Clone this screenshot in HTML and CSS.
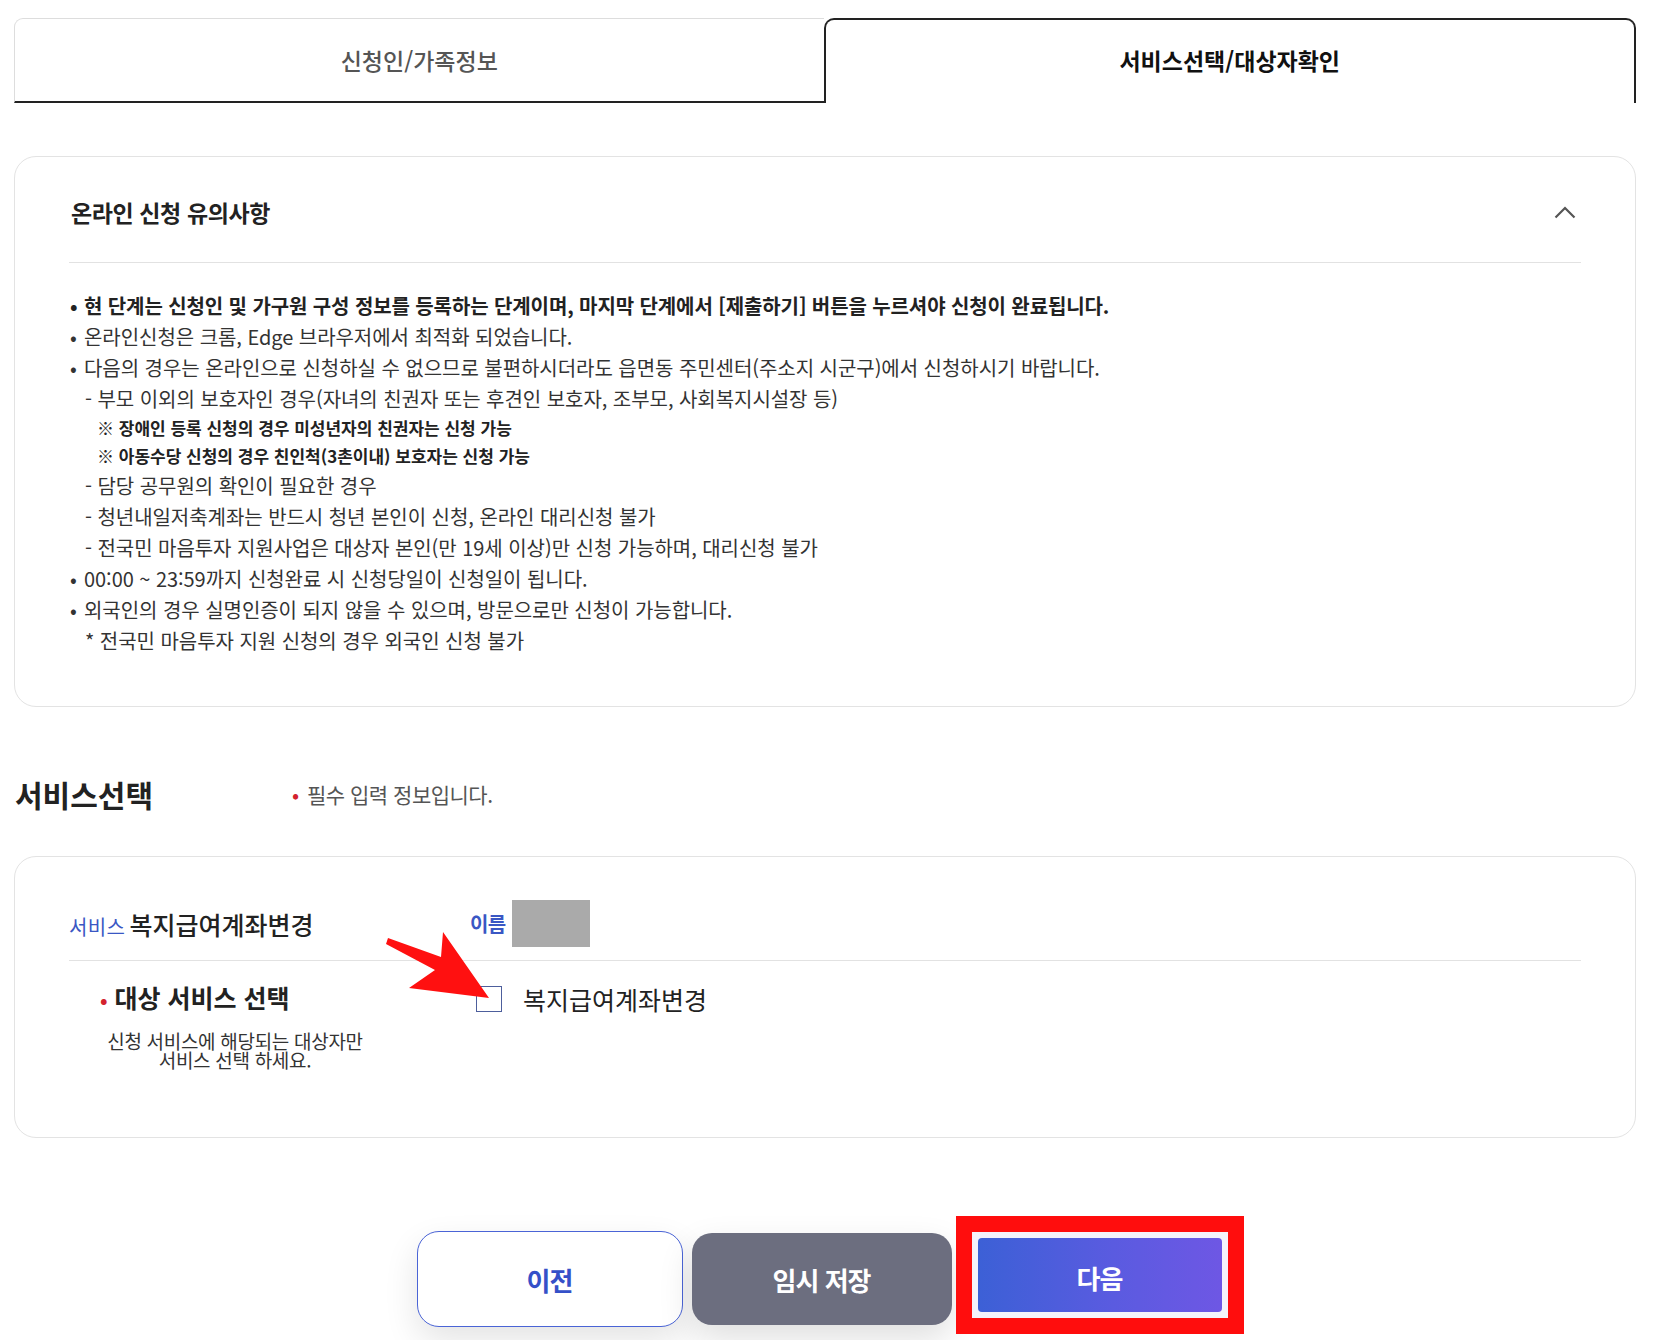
FILE: index.html
```html
<!DOCTYPE html>
<html lang="ko">
<head>
<meta charset="utf-8">
<title>서비스선택/대상자확인</title>
<link rel="stylesheet" href="styles.css">
</head>
<body>
<div class="page">
  <div class="tabs">
    <div class="tab">신청인/가족정보</div>
    <div class="tab active">서비스선택/대상자확인</div>
  </div>

  <section class="notice">
    <div class="notice-head">
      <h2 class="notice-title">온라인 신청 유의사항</h2>
      <svg class="chev" width="22" height="13" viewBox="0 0 22 13"><polyline points="1.5,11.5 11,2 20.5,11.5" fill="none" stroke="#555" stroke-width="2.2"/></svg>
    </div>
    <ul class="notice-list">
      <li class="dot strong">현 단계는 신청인 및 가구원 구성 정보를 등록하는 단계이며, 마지막 단계에서 [제출하기] 버튼을 누르셔야 신청이 완료됩니다.</li>
      <li class="dot">온라인신청은 크롬, Edge 브라우저에서 최적화 되었습니다.</li>
      <li class="dot">다음의 경우는 온라인으로 신청하실 수 없으므로 불편하시더라도 읍면동 주민센터(주소지 시군구)에서 신청하시기 바랍니다.</li>
      <li class="sub">- 부모 이외의 보호자인 경우(자녀의 친권자 또는 후견인 보호자, 조부모, 사회복지시설장 등)</li>
      <li class="note">※ 장애인 등록 신청의 경우 미성년자의 친권자는 신청 가능</li>
      <li class="note">※ 아동수당 신청의 경우 친인척(3촌이내) 보호자는 신청 가능</li>
      <li class="sub">- 담당 공무원의 확인이 필요한 경우</li>
      <li class="sub">- 청년내일저축계좌는 반드시 청년 본인이 신청, 온라인 대리신청 불가</li>
      <li class="sub">- 전국민 마음투자 지원사업은 대상자 본인(만 19세 이상)만 신청 가능하며, 대리신청 불가</li>
      <li class="dot">00:00 ~ 23:59까지 신청완료 시 신청당일이 신청일이 됩니다.</li>
      <li class="dot">외국인의 경우 실명인증이 되지 않을 수 있으며, 방문으로만 신청이 가능합니다.</li>
      <li class="sub">* 전국민 마음투자 지원 신청의 경우 외국인 신청 불가</li>
    </ul>
  </section>

  <div class="sec-head">
    <h2 class="sec-title">서비스선택</h2>
    <p class="req"><span class="rdot">•</span> 필수 입력 정보입니다.</p>
  </div>

  <section class="svc">
    <div class="svc-row svc-top">
      <div class="col1"><span class="blue lbl-svc">서비스</span> <span class="svc-name">복지급여계좌변경</span></div>
      <div class="col2"><span class="blue lbl-name">이름</span><span class="mask"></span></div>
    </div>
    <div class="svc-row svc-body">
      <div class="col1">
        <div class="field">
          <div class="flabel"><span class="rdot">•</span> 대상 서비스 선택</div>
          <p class="fdesc">신청 서비스에 해당되는 대상자만<br>서비스 선택 하세요.</p>
        </div>
      </div>
      <div class="col2">
        <label class="chk"><span class="box"></span><span class="chk-text">복지급여계좌변경</span></label>
      </div>
    </div>
    <svg class="arrow" width="500" height="160" viewBox="0 0 500 160">
      <polygon points="373,81 426,100 428,75 474,141 394,131 420,113 371,87" fill="#ff1010"/>
    </svg>
  </section>

  <div class="btns">
    <button class="btn btn-prev">이전</button>
    <button class="btn btn-save">임시 저장</button>
    <div class="hl">
      <div class="hl-inner">
        <button class="btn btn-next">다음</button>
      </div>
    </div>
  </div>
</div>
</body>
</html>
```

FILE: styles.css
```css
* { box-sizing: border-box; }
html, body { margin: 0; padding: 0; background: #fff; }
body {
  font-family: "Noto Sans CJK KR", "Noto Sans", sans-serif;
  color: #333;
  width: 1660px;
  height: 1340px;
  overflow: hidden;
}
.page {
  padding: 18px 24px 0 14px;
}

/* tabs */
.tabs {
  display: flex;
  height: 85px;
}
.tab {
  flex: 1 1 0;
  display: flex;
  align-items: center;
  justify-content: center;
  font-size: 23px;
  font-weight: 500;
  letter-spacing: 0;
  color: #555;
  border-top: 1px solid #ddd;
  border-left: 1px solid #ddd;
  border-bottom: 2px solid #222;
  border-radius: 9px 0 0 0;
}
.tab.active {
  color: #111;
  font-weight: 700;
  border: 2px solid #222;
  border-bottom: none;
  border-radius: 10px 10px 0 0;
  padding-bottom: 4px;
}

/* notice card */
.notice {
  margin-top: 53px;
  border: 1px solid #e3e3e3;
  border-radius: 22px;
  padding: 0 54px 50px;
}
.notice-head {
  display: flex;
  align-items: center;
  justify-content: space-between;
  padding: 37px 0 32px;
  border-bottom: 1px solid #e2e2e2;
}
.notice-title {
  margin: 0;
  font-size: 23px;
  line-height: 36px;
  font-weight: 700;
  letter-spacing: -0.4px;
  color: #222;
  padding-left: 2px;
}
.chev { margin-right: 5px; margin-top: 0; }
.notice-list {
  list-style: none;
  margin: 27px 0 0;
  padding: 0;
  font-size: 20px;
  line-height: 31px;
  letter-spacing: -0.05px;
  color: #333;
}
.notice-list li { white-space: nowrap; }
.notice-list .dot::before {
  content: "•";
  display: inline-block;
  width: 14px;
  padding-left: 1px;
}
.notice-list .strong { font-weight: 700; color: #222; letter-spacing: -0.1px; }
.notice-list .sub { padding-left: 16px; }
.notice-list .note {
  padding-left: 28px;
  font-size: 17px;
  line-height: 28px;
  font-weight: 700;
  letter-spacing: 0;
  color: #222;
}

/* section head */
.sec-head {
  margin-top: 67px;
  display: flex;
  align-items: center;
  height: 40px;
}
.sec-title {
  margin: 0;
  width: 278px;
  font-size: 30px;
  line-height: 40px;
  font-weight: 700;
  letter-spacing: 0;
  color: #222;
  padding-left: 1px;
}
.req {
  margin: 0;
  font-size: 21px;
  line-height: 30px;
  letter-spacing: -0.5px;
  color: #555;
}
.req .rdot { margin-right: 3px; }
.rdot { color: #d3222e; }

/* service card */
.svc {
  position: relative;
  margin-top: 42px;
  border: 1px solid #e3e3e3;
  border-radius: 22px;
  padding: 0 54px;
  height: 282px;
}
.svc-row { display: flex; }
.svc-top {
  align-items: center;
  padding: 43px 0 13px;
  border-bottom: 1px solid #e2e2e2;
}
.col1 { width: 401px; flex: none; }
.col2 { flex: 1; display: flex; align-items: center; }
.blue { color: #3a57c4; }
.lbl-svc { font-size: 20px; letter-spacing: 0.3px; }
.svc-name { font-size: 25px; letter-spacing: 0; color: #222; font-weight: 500; }
.lbl-name { font-size: 20px; font-weight: 700; letter-spacing: -0.6px; }
.mask {
  display: inline-block;
  width: 78px;
  height: 47px;
  background: #aaaaaa;
  margin-left: 6px;
}
.svc-body {
  padding-top: 20px;
  align-items: flex-start;
}
.field { margin-left: 31px; width: 270px; }
.flabel {
  font-size: 25px;
  line-height: 32px;
  font-weight: 700;
  letter-spacing: 0;
  color: #222;
}
.flabel .rdot { font-size: 20px; }
.fdesc {
  margin: 15px 0 0;
  text-align: center;
  white-space: nowrap;
  font-size: 19px;
  line-height: 19px;
  letter-spacing: -0.3px;
  color: #333;
}
.chk {
  display: flex;
  align-items: center;
  height: 32px;
  margin-top: 2px;
  margin-left: 6px;
}
.box {
  width: 26px;
  height: 26px;
  border: 1.5px solid #4d5e9c;
  background: #fff;
  margin-right: 21px;
}
.chk-text { font-size: 25px; letter-spacing: 0; color: #222; }
.arrow {
  position: absolute;
  left: 0;
  top: 0;
  pointer-events: none;
}

/* buttons */
.btns {
  margin: 78px -24px 0 -14px;
  display: flex;
  justify-content: center;
  align-items: flex-start;
}
.btn {
  font-family: inherit;
  font-weight: 700;
  font-size: 26px;
  letter-spacing: -1px;
  cursor: pointer;
}
.btn-prev {
  margin-top: 15px;
  width: 266px;
  height: 96px;
  background: #fff;
  color: #3550c8;
  border: 1px solid #4a64d6;
  border-radius: 22px;
  box-shadow: 0 14px 34px rgba(0,0,0,0.11);
}
.btn-save {
  margin-top: 17px;
  margin-left: 9px;
  width: 260px;
  height: 92px;
  background: #6c6e7f;
  color: #fff;
  border: none;
  border-radius: 20px;
  box-shadow: 0 14px 34px rgba(0,0,0,0.13);
}
.hl {
  margin-left: 4px;
  background: #ff0d0d;
  padding: 16px;
}
.hl-inner {
  background: #f4f3fb;
  padding: 6px;
}
.btn-next {
  display: block;
  width: 244px;
  height: 74px;
  padding-top: 5px;
  border: none;
  border-radius: 4px;
  color: #fff;
  background: linear-gradient(90deg, #3c60d6 0%, #5a5be0 55%, #6e57e4 100%);
}
```
